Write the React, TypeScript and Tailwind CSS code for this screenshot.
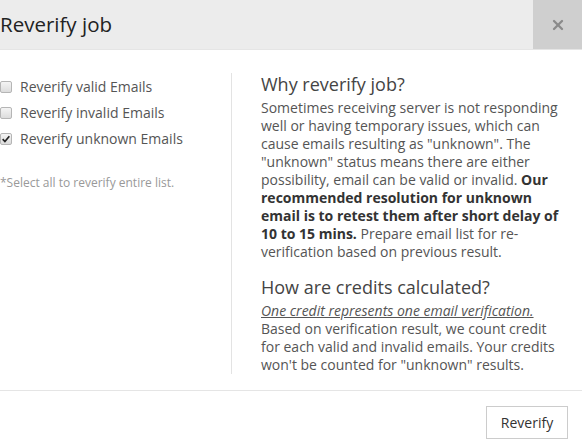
import { X } from 'lucide-react'

const options = [
  { label: 'Reverify valid Emails', checked: false },
  { label: 'Reverify invalid Emails', checked: false },
  { label: 'Reverify unknown Emails', checked: true },
]

function Box({ checked }: { checked: boolean }) {
  return (
    <span className="flex h-[12px] w-[12px] shrink-0 items-center justify-center rounded-[2px] border border-[#b5b5b5] bg-gradient-to-b from-[#f4f4f4] to-[#dcdcdc]">
      {checked && (
        <svg viewBox="0 0 12 12" className="h-[10px] w-[10px]">
          <path d="M2 6.2 L4.7 9 L10 2.6" fill="none" stroke="#222" strokeWidth="2" />
        </svg>
      )}
    </span>
  )
}

export default function App() {
  return (
    <div
      className="flex h-[440px] w-[582px] flex-col bg-white text-[14px] text-[#555]"
      style={{ fontFamily: '"Open Sans", "Noto Sans", sans-serif' }}
    >
      <div className="flex h-[50px] shrink-0 border-b border-[#e5e5e5] bg-[#ececec]">
        <h3 className="flex-1 pt-[10px] text-[20.5px] leading-[28px] text-[#222]">Reverify job</h3>
        <button className="flex w-[49px] items-center justify-center bg-[#cfcfcf] text-[#8a8a8a]">
          <X size={16} strokeWidth={3.4} />
        </button>
      </div>

      <div className="flex flex-1 pt-[23px] pb-[16px]">
        <div className="w-[232px] shrink-0 border-r border-[#e3e3e3]">
          <div className="flex flex-col gap-[6px] pt-[4px]">
            {options.map((o) => (
              <label key={o.label} className="flex h-[20px] items-center gap-[8px] leading-[20px] text-[#555]">
                <Box checked={o.checked} />
                <span>{o.label}</span>
              </label>
            ))}
          </div>
          <p className="mt-[26px] text-[12px] leading-[16px] text-[#999]">*Select all to reverify entire list.</p>
        </div>

        <div className="flex-1 pl-[29px] pr-[20px]">
          <h4 className="text-[18px] leading-[22px] text-[#444]">Why reverify job?</h4>
          <p className="mt-[4px] leading-[18px]">
            Sometimes receiving server is not responding well or having temporary issues, which can cause emails
            resulting as "unknown". The "unknown" status means there are either possibility, email can be valid or
            invalid.{' '}
            <b className="font-bold text-[#333]">
              Our recommended resolution for unknown email is to retest them after short delay of 10 to 15 mins.
            </b>{' '}
            Prepare email list for re-verification based on previous result.
          </p>
          <h4 className="mt-[15px] text-[18px] leading-[22px] text-[#444]">How are credits calculated?</h4>
          <p className="mt-[4px] leading-[18px]">
            <i className="underline">One credit represents one email verification.</i>
            <br />
            Based on verification result, we count credit for each valid and invalid emails. Your credits won't be
            counted for "unknown" results.
          </p>
        </div>
      </div>

      <div className="flex h-[50px] shrink-0 items-start justify-end border-t border-[#e5e5e5] pt-[15px] pr-[14px]">
        <button className="h-[33px] w-[82px] border border-[#ccc] bg-white text-[14px] text-[#333]">Reverify</button>
      </div>
    </div>
  )
}
